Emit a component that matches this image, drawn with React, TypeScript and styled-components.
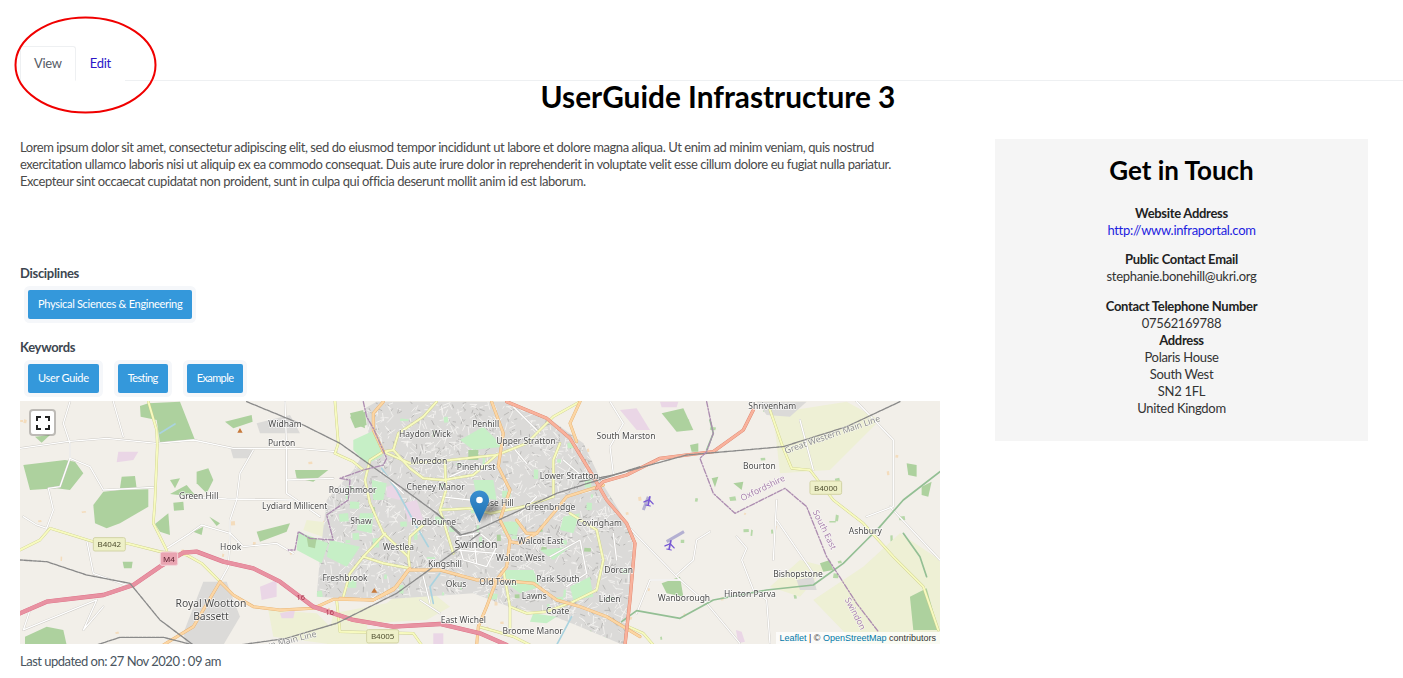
import React from "react";
import styled, { createGlobalStyle } from "styled-components";

const Global = createGlobalStyle`
  html, body { margin: 0; padding: 0; background: #fff; }
  body { font-family: Lato, "Liberation Sans", sans-serif; font-size: 13px; letter-spacing: -0.3px; line-height: 17px; color: #4a4a4a; }
`;
const Page = styled.div`position: relative; width: 1403px; height: 678px; overflow: hidden;`;
const Tabs = styled.nav`display: flex; margin: 0 0 0 20px; padding-top: 46px; border-bottom: 1px solid #eef0f2; height: 34px;`;
const Tab = styled.a<{ $active?: boolean }>`
  box-sizing: border-box; height: 35px; padding: 9px 14px; cursor: pointer;
  color: ${(p) => (p.$active ? "#555b66" : "#2c17c8")};
  background: #fff;
  ${(p) => (p.$active ? "border: 1px solid #eef0f2; border-bottom-color: #fff; border-radius: 3px 3px 0 0; padding: 8px 13px;" : "")}
`;
const Ring = styled.svg`position: absolute; left: 10px; top: 12px; pointer-events: none;`;
const Main = styled.main`padding: 0 20px;`;
const Title = styled.h1`margin: 0; padding: 0 0 0 33px; height: 58px; line-height: 32px; font-size: 29.8px; letter-spacing: 0; font-weight: 700; color: #000; text-align: center;`;
const Columns = styled.div`display: flex; gap: 55px; align-items: flex-start;`;
const Left = styled.div`width: 920px; flex: none;`;
const Intro = styled.p`max-width: 900px; margin: 0 0 75px; color: #4a4a4a; letter-spacing: -0.43px;`;
const SectionLabel = styled.div<{ $gap?: boolean }>`font-weight: 700; color: #3d4650; font-size: 13px; margin-top: ${(p) => (p.$gap ? "20px" : "0")};`;
const TagRow = styled.div`display: flex; gap: 19px; margin: 8px 0 0 8px;`;
const Tag = styled.span<{ $narrow?: boolean }>`
  display: block; height: 29px; line-height: 28px; padding: 0 10px; font-size: 11px; letter-spacing: ${(p) => (p.$narrow ? "-0.6px" : "-0.3px")}; color: #fff;
  background: #3498db; border-radius: 2px; box-shadow: 0 0 0 4px #f5f7fa;
`;
const MapBox = styled.div`position: relative; width: 920px; height: 243px; margin-top: 8px; overflow: hidden; background: #f2efe9;`;
const MapArt = styled.svg`display: block; filter: blur(0.35px); letter-spacing: 0;`;
const FullBtn = styled.div`
  position: absolute; left: 9px; top: 8px; box-sizing: border-box; width: 27px; height: 27px;
  background: #fff; border: 2px solid rgba(0,0,0,.22); border-radius: 4px; background-clip: padding-box;
  display: flex; align-items: center; justify-content: center;
`;
const Pin = styled.svg`position: absolute; left: 449px; top: 88px; overflow: visible;`;
const Attribution = styled.div`
  position: absolute; right: 0; bottom: 0; padding: 0 4px 0 3px; height: 12px; line-height: 12px; letter-spacing: 0;
  font-family: "Liberation Sans", Arial, sans-serif; font-size: 9px; color: #333; background: rgba(255,255,255,.72);
  a { color: #0078a8; }
`;
const Updated = styled.p`margin: 9px 0 0; color: #4a5560; letter-spacing: -0.5px;`;
const Panel = styled.aside`box-sizing: border-box; width: 373px; height: 302px; padding: 13px 20px 0; background: #f5f5f5; text-align: center; color: #333;`;
const PanelTitle = styled.h2`margin: 0 0 17px; font-size: 26px; line-height: 36px; letter-spacing: 0; font-weight: 700; color: #000;`;
const Block = styled.div<{ $wide?: boolean }>`margin-bottom: ${(p) => (p.$wide ? "13px" : "12px")}; &:last-child { margin-bottom: 0; }`;
const Strong = styled.div`font-weight: 700; color: #222;`;
const Link = styled.a`color: #1c1ce0;`;

type Kind = "pale" | "urban" | "lawn" | "forest" | "pink" | "water" | "minor" | "green" | "yellow" | "orange" | "trunk" | "motor" | "rail" | "border";
const LEFT = 0, MID = 320, RIGHT = 460;
const features: [Kind, number, string][] = [
  ["pale", RIGHT, "M880,40 L1100,5 L1200,60 L1050,210 L900,220Z"],
  ["pale", RIGHT, "M1000,600 L1150,500 L1260,400 L1380,480 L1380,735 L1130,735Z"],
  ["pale", RIGHT, "M870,560 L960,480 L1040,500 L960,590Z"],
  ["pale", MID, "M-20,640 L140,610 L230,540 L330,620 L260,660 L80,670 L90,735 L-40,735Z"],
  ["pale", LEFT, "M745,630 L890,640 L950,700 L950,735 L760,710Z"],
  ["pale", LEFT, "M860,360 L940,370 L935,420 L850,390Z"],
  ["urban", MID, "M75,25 L110,5 L500,5 L620,50 L730,130 L790,255 L880,400 L870,650 L850,735 L720,680 L620,640 L520,625 L400,580 L250,590 L100,600 L-70,590 L-60,470 L-40,300 L40,210 L90,130Z"],
  ["urban", LEFT, "M630,140 L700,150 L690,175 L640,175Z"],
  ["urban", LEFT, "M490,700 L550,545 L620,545 L660,650 L610,735 L500,735Z"],
  ["urban", LEFT, "M710,70 L810,45 L840,100 L720,100Z"],
  ["urban", RIGHT, "M830,5 L980,5 L930,50 L860,45Z"],
  ["urban", RIGHT, "M950,540 L1000,530 L1010,570 L960,570Z"],
  ["pale", MID, "M620,180 L640,240 L570,240 L530,220Z"],
  ["pale", MID, "M580,140 L620,120 L640,170 L570,180Z"],
  ["lawn", LEFT, "M1000,120 L1065,90 L1088,168 L1040,192 L1000,150Z"],
  ["lawn", LEFT, "M835,395 L925,430 L905,490 L830,450Z"],
  ["lawn", MID, "M95,240 L140,250 L130,300 L100,300Z"],
  ["lawn", MID, "M490,510 L580,510 L600,560 L540,580 L500,550Z"],
  ["lawn", MID, "M360,120 L430,80 L490,140 L400,150Z"],
  ["lawn", MID, "M60,340 L100,340 L95,400 L50,390Z"],
  ["lawn", MID, "M490,365 L540,365 L530,405 L490,400Z"],
  ["lawn", MID, "M-30,420 L60,440 L20,500 L-40,470Z"],
  ["lawn", MID, "M600,450 L690,440 L640,480Z"],
  ["lawn", MID, "M690,560 L750,530 L760,590 L700,600Z"],
  ["lawn", MID, "M580,640 L650,650 L620,670 L570,665Z"],
  ["lawn", MID, "M400,240 L460,240 L470,300 L410,290Z"],
  ["lawn", MID, "M670,350 L720,340 L700,400 L660,390Z"],
  ["forest", LEFT, "M385,10 L480,5 L525,120 L420,130 L410,60 L362,50 L360,18Z"],
  ["forest", LEFT, "M10,195 L135,180 L165,185 L190,220 L150,270 L110,265 L30,270Z"],
  ["forest", LEFT, "M220,315 L250,275 L300,270 L385,268 L385,320 L300,370 L260,385 L225,370Z"],
  ["forest", LEFT, "M530,215 L565,205 L580,240 L560,280 L530,250Z"],
  ["forest", LEFT, "M305,230 L345,228 L350,265 L300,265Z"],
  ["forest", LEFT, "M450,240 L480,235 L465,265Z"],
  ["forest", LEFT, "M450,282 L500,255 L525,285 L475,285Z"],
  ["forest", LEFT, "M460,308 L490,305 L492,330 L462,332Z"],
  ["forest", LEFT, "M405,372 L445,340 L450,405 L420,395Z"],
  ["forest", LEFT, "M615,65 L695,45 L698,65 L640,85Z"],
  ["forest", LEFT, "M710,395 L810,370 L800,395 L720,425Z"],
  ["forest", LEFT, "M568,350 L600,370 L590,378Z"],
  ["forest", LEFT, "M825,210 L925,210 L880,245 L830,235Z"],
  ["forest", LEFT, "M15,710 L80,680 L130,690 L140,735 L15,735Z"],
  ["forest", LEFT, "M45,110 L90,105 L65,128Z"],
  ["forest", LEFT, "M990,40 L1030,30 L1035,85 L1000,70Z"],
  ["forest", LEFT, "M520,395 L550,380 L545,405Z"],
  ["forest", LEFT, "M308,485 L338,485 L335,505 L312,505Z"],
  ["forest", LEFT, "M860,410 L890,415 L885,445 L865,440Z"],
  ["forest", RIGHT, "M545,40 L610,25 L640,90 L590,95Z"],
  ["forest", RIGHT, "M630,135 L655,130 L655,155 L635,155Z"],
  ["forest", RIGHT, "M545,550 L600,530 L610,590 L560,580Z"],
  ["forest", RIGHT, "M695,235 L715,230 L705,262Z"],
  ["forest", RIGHT, "M760,250 L790,245 L785,270Z"],
  ["forest", RIGHT, "M1290,590 L1340,565 L1375,690 L1300,690Z"],
  ["forest", RIGHT, "M1325,260 L1355,245 L1345,290 L1325,285Z"],
  ["forest", RIGHT, "M1020,490 L1050,480 L1060,510 L1030,515Z"],
  ["forest", RIGHT, "M1280,190 L1310,195 L1310,230 L1285,225Z"],
  ["forest", MID, "M30,50 L75,35 L80,75 L45,85Z"],
  ["forest", MID, "M385,150 L415,150 L415,180 L385,180Z"],
  ["pink", LEFT, "M295,155 L355,155 L340,180 L290,187Z"],
  ["pink", LEFT, "M720,560 L770,540 L770,590 L725,600Z"],
  ["pink", LEFT, "M780,640 L825,630 L820,655 L785,655Z"],
  ["pink", LEFT, "M1240,700 L1270,700 L1270,735 L1240,735Z"],
  ["pink", LEFT, "M1100,260 L1140,250 L1140,300 L1100,290Z"],
  ["pink", LEFT, "M1150,310 L1190,300 L1210,360 L1165,365Z"],
  ["pink", RIGHT, "M420,30 L470,25 L510,90 L470,90Z"],
  ["pink", RIGHT, "M540,5 L595,5 L590,22 L545,22Z"],
  ["pink", RIGHT, "M768,690 L785,695 L795,725 L775,730Z"],
  ["water", LEFT, "M1085,205 L1130,270 L1190,380 L1225,440"],
  ["water", LEFT, "M1260,520 L1230,560 L1240,610"],
  ["water", LEFT, "M420,100 L465,72"],
  ["water", RIGHT, "M230,735 L275,650"],
  ["minor", LEFT, "M0,145 L140,125 L260,115 L410,130 L520,120 L640,145 L830,145 L950,155"],
  ["minor", LEFT, "M150,5 L130,70 L150,130 L150,175 L120,260 L85,265 L100,330 L80,385 L50,375 L10,350"],
  ["minor", LEFT, "M150,175 L210,200 L250,270 L400,262"],
  ["minor", LEFT, "M280,5 L310,110"],
  ["minor", LEFT, "M795,5 L800,145 L800,280 L830,300 L900,350"],
  ["minor", LEFT, "M490,290 L620,297 L820,300"],
  ["minor", LEFT, "M700,150 L660,220 L650,300 L630,360 L630,420 L625,500 L600,545"],
  ["minor", LEFT, "M440,445 L510,400 L545,375 L630,400 L670,440 L770,430 L820,460"],
  ["minor", LEFT, "M200,420 L220,520 L330,560"],
  ["minor", LEFT, "M30,630 L10,690 L230,600 L190,690 L250,620"],
  ["minor", LEFT, "M800,240 L940,235"],
  ["minor", MID, "M350,410 L420,400 L470,440 L440,500 L370,480Z"],
  ["minor", MID, "M400,400 L410,490 M350,450 L470,460"],
  ["minor", MID, "M250,530 L270,610 M240,600 L300,640"],
  ["minor", MID, "M630,470 L720,420 L740,520 L680,560"],
  ["minor", MID, "M520,20 L600,100 M500,120 L560,190"],
  ["minor", MID, "M330,230 L420,190 M300,290 L390,300"],
  ["minor", MID, "M670,180 L740,240 M130,220 L190,280"],
  ["minor", MID, "M590,290 L540,340 M820,400 L830,480"],
  ["minor", RIGHT, "M390,5 L430,70 L390,140 L400,220"],
  ["minor", RIGHT, "M440,375 L590,530 L680,610 L780,730"],
  ["minor", RIGHT, "M590,525 L640,480 L650,420 L690,395"],
  ["minor", RIGHT, "M470,640 L510,540 L600,540"],
  ["minor", RIGHT, "M770,410 L800,445 L785,480 L820,570 L860,600 L870,730"],
  ["minor", RIGHT, "M890,300 L880,480"],
  ["minor", RIGHT, "M890,360 L1000,520"],
  ["minor", RIGHT, "M1130,5 L1240,120 L1240,320 L1160,350"],
  ["minor", RIGHT, "M960,60 L1000,210"],
  ["minor", RIGHT, "M1230,320 L1380,480"],
  ["green", RIGHT, "M425,665 L470,632 L600,655 L700,600 L860,570 L1000,555 L1090,490 L1160,420 L1200,380"],
  ["green", RIGHT, "M1200,380 L1270,300 L1380,215"],
  ["green", RIGHT, "M1270,400 L1320,470 L1340,530"],
  ["green", RIGHT, "M680,150 L700,100 L690,60"],
  ["yellow", LEFT, "M385,5 L410,90 L412,135 L405,300 L400,370 L440,450"],
  ["yellow", LEFT, "M0,450 L60,420 L90,385 L220,425 L320,430 L420,455 L500,465 L545,490 L600,545"],
  ["yellow", LEFT, "M945,5 L955,130 L945,160 L1000,185 L1030,210"],
  ["yellow", LEFT, "M950,600 L960,695 L1180,700 L1205,735"],
  ["yellow", MID, "M290,5 L250,50 L175,100 L160,150 L130,155 L90,180 L75,240 L90,310 L130,400 L205,470 L210,510"],
  ["yellow", MID, "M160,150 L210,205 L250,235 L310,240 L400,225 L470,165 L560,130 L640,50 L720,5"],
  ["yellow", MID, "M130,155 L210,190 L330,180 L470,165"],
  ["yellow", MID, "M135,400 L70,470 L30,520 L10,590"],
  ["yellow", MID, "M70,470 L130,490 L210,505"],
  ["yellow", MID, "M315,190 L318,270 L300,330 L390,325 L450,340 L550,320 L640,290"],
  ["yellow", MID, "M300,330 L340,460"],
  ["yellow", MID, "M205,470 L210,410 L250,375"],
  ["yellow", MID, "M640,290 L640,180 L660,130"],
  ["yellow", MID, "M690,340 L770,390 L790,480 L770,570 L700,605"],
  ["yellow", MID, "M490,510 L510,620 L560,640 L620,635 L700,605"],
  ["yellow", MID, "M415,680 L470,695 L520,710 L570,735"],
  ["yellow", MID, "M510,620 L510,690"],
  ["yellow", RIGHT, "M870,30 L910,145 L935,205 L990,210 L1060,300 L1150,370 L1240,470 L1330,560 L1375,690"],
  ["yellow", RIGHT, "M445,680 L490,700 L520,735"],
  ["orange", LEFT, "M600,545 L640,585 L700,620 L780,630 L880,625 L940,598 L1060,600 L1130,560 L1170,505"],
  ["orange", LEFT, "M430,735 L520,680 L600,545"],
  ["orange", MID, "M0,595 L100,600 L160,570 L205,510 L300,510 L410,540 L470,540 L580,550 L650,600 L720,620 L800,650 L900,710"],
  ["orange", MID, "M455,5 L490,100 L475,200 L510,270 L480,360 L510,420 L500,500 L470,540"],
  ["orange", MID, "M790,255 L680,290 L640,340 L590,400 L540,430 L510,425"],
  ["orange", MID, "M530,360 L560,400 L590,400"],
  ["orange", MID, "M130,5 L100,40 L100,90 L130,155"],
  ["orange", MID, "M470,540 L440,620 L415,680 L410,735"],
  ["orange", MID, "M720,5 L690,70 L710,125"],
  ["trunk", RIGHT, "M80,5 L200,55 L270,115 L340,230 L380,300 L440,370 L465,430 L450,600 L435,735"],
  ["trunk", RIGHT, "M820,30 L790,90 L700,155 L540,175 L440,225 L370,245 L350,265"],
  ["motor", LEFT, "M0,640 L80,605 L250,585 L340,555 L420,500 L490,458 L530,455 L610,485 L700,505 L780,545 L880,620 L1000,660 L1120,680 L1260,672 L1380,700 L1460,735"],
  ["rail", LEFT, "M680,5 L850,75 L960,130 L1100,230 L1250,340 L1320,400"],
  ["rail", LEFT, "M0,480 L80,485 L200,525 L330,550 L420,660 L520,735"],
  ["rail", LEFT, "M230,735 L300,712 L430,712 L520,735"],
  ["rail", LEFT, "M660,735 L800,715 L950,670 L1130,580 L1380,400"],
  ["rail", MID, "M290,340 L360,405 L400,395 L650,280 L900,200"],
  ["rail", RIGHT, "M300,245 L400,225 L620,165 L910,140 L1100,80 L1260,5"],
  ["border", LEFT, "M1030,5 L1040,50 L1060,85 L1100,175 L1090,195 L1030,210 L960,235 L990,240 L985,300 L920,345 L940,420 L870,415 L835,395 L825,450 L805,450"],
  ["border", RIGHT, "M680,5 L700,100 L680,155 L660,175 L700,280 L765,340 L915,265 L980,320 L1040,470 L1130,610 L1195,695"],
];
const order: Kind[] = ["pale", "urban", "lawn", "forest", "pink", "water", "minor", "green", "yellow", "orange", "trunk", "motor", "rail", "border"];
const fills: Partial<Record<Kind, string>> = { pale: "#eef0d5", urban: "#dbdad8", lawn: "#c6efc6", forest: "#add19e", pink: "#ead6e6" };

const strokes: Partial<Record<Kind, [string, number, string?, number?]>> = {
  water: ["#aad3df", 5],
  minor: ["#fff", 4, "#c9c6c1", 6],
  green: ["#93bf94", 5],
  yellow: ["#f7fabf", 6, "#c9cc8a", 8],
  orange: ["#fcd6a4", 7, "#e3ad6c", 9],
  trunk: ["#f9b29c", 8, "#d9806a", 10],
  motor: ["#e892a2", 11, "#dc6f86", 13],
  rail: ["#8a8a8a", 4],
  border: ["#ac8cb0", 4],
};

type Label = [string, number, number, number, number?];
const labels: Label[] = [
  ["Widham", LEFT, 795, 72], ["Purton", LEFT, 785, 128], ["Green Hill", LEFT, 536, 289], ["Lydiard Millicent", LEFT, 824, 318],
  ["Hook", LEFT, 632, 440], ["Royal Wootton", LEFT, 573, 611, 31], ["Bassett", LEFT, 573, 652, 31],
  ["Penhill", MID, 437, 71], ["Haydon Wick", MID, 255, 102], ["Upper Stratton", MID, 558, 122], ["Moredon", MID, 267, 182],
  ["Pinehurst", MID, 408, 202], ["Lower Stratton", MID, 688, 227], ["Cheney Manor", MID, 287, 262], ["Roughmoor", MID, 38, 270],
  ["Rose Hill", MID, 470, 308], ["Greenbridge", MID, 630, 320], ["Shaw", MID, 63, 362], ["Rodbourne", MID, 281, 365],
  ["Covingham", MID, 778, 368], ["Westlea", MID, 175, 442], ["Walcot East", MID, 602, 423], ["Swindon", MID, 408, 436, 32],
  ["Walcot West", MID, 541, 475], ["Kingshill", MID, 315, 491], ["Dorcan", MID, 836, 510], ["Freshbrook", MID, 15, 535],
  ["Park South", MID, 654, 538], ["Okus", MID, 348, 552], ["Old Town", MID, 474, 547], ["Lawns", MID, 583, 588], ["Liden", MID, 809, 598],
  ["Coate", MID, 653, 632], ["East Wichel", MID, 370, 660], ["Broome Manor", MID, 578, 692],
  ["Shrivenham", RIGHT, 877, 17], ["South Marston", RIGHT, 438, 107], ["Bourton", RIGHT, 838, 198], ["Ashbury", RIGHT, 1156, 392],
  ["Bishopstone", RIGHT, 954, 521], ["Hinton Parva", RIGHT, 810, 582], ["Wanborough", RIGHT, 612, 593],
];
type Curved = [string, number, number, number, number, string];
const curved: Curved[] = [
  ["Great Western Main Line", RIGHT, 1060, 112, -19, "#8d8d8d"],
  ["Oxfordshire", RIGHT, 852, 272, -26, "#a781ab"],
  ["South East", RIGHT, 1026, 393, 64, "#a781ab"],
  ["Swindon", RIGHT, 1118, 645, 62, "#a781ab"],
  ["Great Western Main Line", LEFT, 745, 746, -14, "#8d8d8d"],
];
const shields: [string, number, number, number, number, string, string][] = [
  ["B4042", LEFT, 220, 413, 96, "#eef0c8", "#4f4f30"],
  ["B4005", LEFT, 1040, 689, 96, "#eef0c8", "#4f4f30"],
  ["B4000", RIGHT, 990, 243, 95, "#eef0c8", "#4f4f30"],
];

function seeded(seed: number) {
  let s = seed;
  return () => { s = (s * 16807) % 2147483647; return s / 2147483647; };
}
function streets(count: number, seed: number, x0: number, w: number, min: number, span: number) {
  const r = seeded(seed);
  let d = "";
  for (let i = 0; i < count; i++) {
    const x = r() * w + x0, y = r() * 243;
    const a = r() * Math.PI, l = min + r() * span;
    d += `M${x.toFixed(1)},${y.toFixed(1)}l${(Math.cos(a) * l).toFixed(1)},${(Math.sin(a) * l).toFixed(1)}`;
  }
  return d;
}
function blobs(count: number, seed: number, x0: number, w: number, size: number) {
  const r = seeded(seed);
  let d = "";
  for (let i = 0; i < count; i++) {
    const x = r() * w + x0, y = r() * 243, a = 1.5 + r() * size, b = 1.5 + r() * size, c = r() * 2 - 1;
    d += `M${x.toFixed(1)},${y.toFixed(1)}l${a.toFixed(1)},${c.toFixed(1)}l${(-c).toFixed(1)},${b.toFixed(1)}l${(-a).toFixed(1)},${(-c * 0.5).toFixed(1)}Z`;
  }
  return d;
}
const streetPath = streets(1700, 42, 290, 340, 3, 7);
const grayPath = streets(900, 7, 290, 340, 2, 4);
const lawnSpots = blobs(70, 11, 290, 340, 8);
const midSpots = blobs(14, 23, 290, 340, 6);
const farmSpots = blobs(42, 31, 0, 920, 3);
const woodSpots = blobs(26, 53, 640, 280, 5);
const urbanClip = features.filter((f) => f[0] === "urban");
const T = (o: number) => `translate(${o},-1) scale(0.3333)`;

function MapDrawing() {
  return (
    <MapArt width="920" height="243" viewBox="0 0 920 243">
      <rect width="920" height="243" fill="#f2efe9" />
      <path d={farmSpots} fill="#f4dcbc" />
      <path d={woodSpots} fill="#b6d8a8" />
      <defs>
        <clipPath id="urb">
          {urbanClip.filter((f) => f[1] === MID).map((f, i) => <path key={i} d={f[2]} transform={T(f[1])} />)}
        </clipPath>
      </defs>
      {order.map((k) => {
        const list = features.filter((f) => f[0] === k);
        const st = strokes[k];
        const fill = fills[k];
        return (
          <g key={k}>
            {fill && list.map((f, i) => <path key={i} d={f[2]} transform={T(f[1])} fill={fill} />)}
            {st && st[2] && list.map((f, i) => (
              <path key={"c" + i} d={f[2]} transform={T(f[1])} fill="none" stroke={st[2]} strokeWidth={st[3]} strokeLinejoin="round" strokeLinecap="round" />
            ))}
            {st && list.map((f, i) => (
              <path key={i} d={f[2]} transform={T(f[1])} fill="none" stroke={st[0]} strokeWidth={st[1]} strokeLinejoin="round" strokeLinecap="round"
                strokeDasharray={k === "border" ? "16 5 5 5" : k === "rail" ? "10 3" : undefined} />
            ))}
            {k === "urban" && (
              <g clipPath="url(#urb)">
                <path d={grayPath} stroke="#b9b8b6" strokeWidth="1" fill="none" />
                <path d={streetPath} stroke="#f6f5f3" strokeWidth="0.8" fill="none" />
                <path d={lawnSpots} fill="#c6efc6" />
                <path d={midSpots} fill="#add19e" />
              </g>
            )}
          </g>
        );
      })}
      <g transform={T(LEFT)}>
        <path d="M660,84 L652,98 L668,98Z M1063,564 L1054,578 L1072,578Z" fill="#c77a3c" />
      </g>
      <g transform={T(RIGHT)}>
        <path d="M505,290 L490,330 M560,425 L612,395" stroke="#b4b0d2" strokeWidth="9" fill="none" />
        <g fill="none" stroke="#7758d4" strokeLinecap="round">
          <g transform="rotate(12 507 303)">
            <path d="M507,290 V316" strokeWidth="5" />
            <path d="M493,309 L507,299 L521,309" strokeWidth="4" />
            <path d="M500,317 H514" strokeWidth="3" />
          </g>
          <g transform="rotate(12 570 435)">
            <path d="M570,422 V448" strokeWidth="5" />
            <path d="M556,441 L570,431 L584,441" strokeWidth="4" />
            <path d="M563,449 H577" strokeWidth="3" />
          </g>
        </g>
      </g>
      <g fontFamily="'Noto Sans', 'Open Sans', sans-serif" textAnchor="middle">
        {labels.map(([t, o, x, y, s], i) => (
          <text key={i} transform={T(o)} x={x} y={y + 9} fontSize={s ?? 25.5} fill="#4c4c4c" stroke="#fff" strokeWidth="4" strokeOpacity="0.8" paintOrder="stroke">{t}</text>
        ))}
        {curved.map(([t, o, x, y, a, c], i) => (
          <text key={i} transform={`${T(o)} rotate(${a} ${x} ${y})`} x={x} y={y} fontSize="26" fill={c} stroke="#fff" strokeWidth="3" strokeOpacity="0.7" paintOrder="stroke">{t}</text>
        ))}
        {shields.map(([t, o, x, y, w, f, c], i) => (
          <g key={i} transform={T(o)}>
            <rect x={x} y={y} width={w} height="40" rx="5" fill={f} stroke="#d2d3a4" strokeWidth="3" />
            <text x={x + w / 2} y={y + 29} fontSize="24" fill={c}>{t}</text>
          </g>
        ))}
        <g transform={T(LEFT)}>
          <rect x="421" y="456" width="52" height="40" rx="5" fill="#e9a4b1" stroke="#f3d5da" strokeWidth="3" />
          <text x="447" y="486" fontSize="24" fill="#5a1f2e">M4</text>
          <text x="842" y="601" fontSize="22" fill="#a8324b">16</text>
          <text x="929" y="646" fontSize="22" fill="#a8324b">16</text>
        </g>
      </g>
    </MapArt>
  );
}

export default function App() {
  return (
    <Page>
      <Global />
      <Tabs>
        <Tab $active>View</Tab>
        <Tab>Edit</Tab>
      </Tabs>
      <Ring width="152" height="106" viewBox="0 0 152 106">
        <ellipse cx="75.5" cy="53" rx="70" ry="47.5" fill="none" stroke="#f00000" strokeWidth="2" />
      </Ring>
      <Main>
        <Title>UserGuide Infrastructure 3</Title>
        <Columns>
          <Left>
            <Intro>
              Lorem ipsum dolor sit amet, consectetur adipiscing elit, sed do eiusmod tempor incididunt ut labore et dolore magna aliqua. Ut enim ad minim veniam, quis nostrud exercitation ullamco laboris nisi ut aliquip ex ea commodo consequat. Duis aute irure dolor in reprehenderit in voluptate velit esse cillum dolore eu fugiat nulla pariatur. Excepteur sint occaecat cupidatat non proident, sunt in culpa qui officia deserunt mollit anim id est laborum.
            </Intro>
            <SectionLabel>Disciplines</SectionLabel>
            <TagRow><Tag>Physical Sciences &amp; Engineering</Tag></TagRow>
            <SectionLabel $gap>Keywords</SectionLabel>
            <TagRow><Tag>User Guide</Tag><Tag $narrow>Testing</Tag><Tag $narrow>Example</Tag></TagRow>
            <MapBox>
              <MapDrawing />
              <FullBtn>
                <svg width="14" height="14" viewBox="0 0 14 14" fill="none" stroke="#222" strokeWidth="2">
                  <path d="M1,5 V1 H5 M9,1 H13 V5 M13,9 V13 H9 M5,13 H1 V9" />
                </svg>
              </FullBtn>
              <Pin width="26" height="36" viewBox="0 0 26 36">
                <defs>
                  <linearGradient id="pinFill" x1="0" y1="0" x2="0" y2="1">
                    <stop offset="0" stopColor="#3a8fd0" />
                    <stop offset="1" stopColor="#1f6fb0" />
                  </linearGradient>
                  <filter id="pinShade" x="-50%" y="-50%" width="200%" height="200%"><feGaussianBlur stdDeviation="2" /></filter>
                </defs>
                <path d="M11,33 L32,20 L24,14 L15,18Z" fill="#000" opacity="0.35" filter="url(#pinShade)" />
                <path d="M10.5,1.5 C5.2,1.5 1,5.7 1,11 C1,13 1.7,14.8 2.5,16.5 L10.5,33.5 L18.5,16.5 C19.3,14.8 20,13 20,11 C20,5.7 15.8,1.5 10.5,1.5Z" fill="url(#pinFill)" />
                <circle cx="10.5" cy="11" r="3.3" fill="#fff" />
              </Pin>
              <Attribution><a>Leaflet</a> | © <a>OpenStreetMap</a> contributors</Attribution>
            </MapBox>
            <Updated>Last updated on: 27 Nov 2020 : 09 am</Updated>
          </Left>
          <Panel>
            <PanelTitle>Get in Touch</PanelTitle>
            <Block><Strong>Website Address</Strong><Link>http://www.infraportal.com</Link></Block>
            <Block $wide><Strong>Public Contact Email</Strong>stephanie.bonehill@ukri.org</Block>
            <Block>
              <Strong>Contact Telephone Number</Strong>
              <div>07562169788</div>
              <Strong>Address</Strong>
              <div>Polaris House</div>
              <div>South West</div>
              <div>SN2 1FL</div>
              <div>United Kingdom</div>
            </Block>
          </Panel>
        </Columns>
      </Main>
    </Page>
  );
}
